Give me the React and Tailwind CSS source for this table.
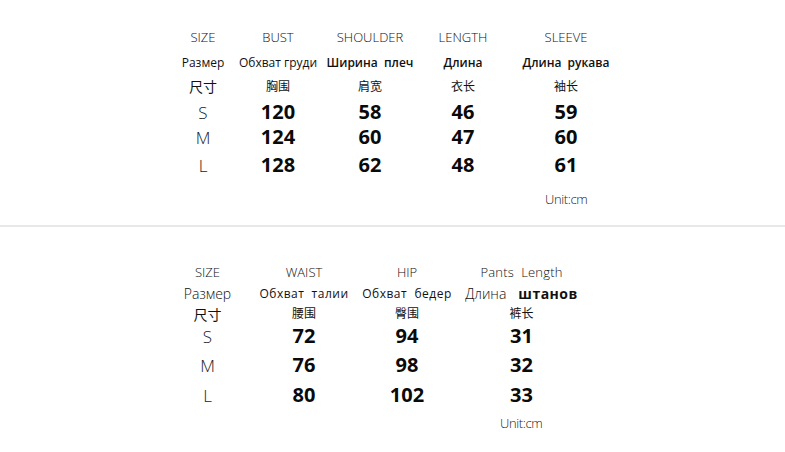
import React from "react"

const font = { fontFamily: '"Open Sans", "Noto Sans CJK SC", sans-serif' }

const topCols = "grid grid-cols-[70px_80px_104px_82px_124px] ml-[168px] text-center"
const botCols = "grid grid-cols-[97px_96px_110px_119px] ml-[159px] text-center"

const topRows = [
  ["S", "120", "58", "46", "59"],
  ["M", "124", "60", "47", "60"],
  ["L", "128", "62", "48", "61"],
]

const botRows = [
  ["S", "72", "94", "31"],
  ["M", "76", "98", "32"],
  ["L", "80", "102", "33"],
]

const topHeights = ["h-[28px]", "h-[22px]", "h-[34px]"]
const botHeights = ["h-[22px]", "h-[36px]", "h-[24px]"]

function NumRow({ cols, row, h }) {
  return (
    <div className={`${cols} ${h} items-center`}>
      <div className="text-[17px] leading-none font-light text-[#222]">{row[0]}</div>
      {row.slice(1).map((v, i) => (
        <div key={i} className="text-[20px] leading-none font-bold text-[#0a0a0a]">
          {v}
        </div>
      ))}
    </div>
  )
}

export default function App() {
  return (
    <div className="w-[785px] h-[452px] bg-white overflow-hidden text-[#222]" style={font}>
      {/* upper table */}
      <div className="h-[225px] pt-[25px]">
        <div className={`${topCols} h-[25px] items-center text-[13px] font-light text-[#111]`}>
          <div>SIZE</div>
          <div>BUST</div>
          <div>SHOULDER</div>
          <div>LENGTH</div>
          <div>SLEEVE</div>
        </div>
        <div className={`${topCols} h-[25px] items-center text-[12px] text-[#111]`}>
          <div>Размер</div>
          <div>Обхват груди</div>
          <div className="font-semibold">Ширина&nbsp; плеч</div>
          <div className="font-semibold">Длина</div>
          <div className="font-semibold">Длина&nbsp; рукава</div>
        </div>
        <div className={`${topCols} h-[23px] items-center text-[12px] text-[#111]`}>
          <div className="text-[14px]">尺寸</div>
          <div>胸围</div>
          <div>肩宽</div>
          <div>衣长</div>
          <div>袖长</div>
        </div>
        {topRows.map((r, i) => (
          <NumRow key={i} cols={topCols} row={r} h={topHeights[i]} />
        ))}
        <div className="mt-[8px] h-[20px] flex items-center pl-[545px] text-[13px] font-light text-[#222] tracking-[-0.4px]">
          Unit:cm
        </div>
      </div>

      <div className="h-[2px] bg-[#e8e8e8]" />

      {/* lower table */}
      <div className="pt-[36px]">
        <div className={`${botCols} h-[20px] items-center text-[13px] font-light text-[#111]`}>
          <div>SIZE</div>
          <div>WAIST</div>
          <div>HIP</div>
          <div className="tracking-[0.2px]">Pants&nbsp; Length</div>
        </div>
        <div className={`${botCols} h-[20px] items-center text-[12px] text-[#111]`}>
          <div className="font-light text-[14px]">Размер</div>
          <div className="font-medium tracking-[0.5px]">Обхват&nbsp; талии</div>
          <div className="font-medium tracking-[0.5px]">Обхват&nbsp; бедер</div>
          <div>
            <span className="font-light text-[14px]">Длина</span>
            <span className="ml-[12px] font-bold text-[14px] tracking-[0.5px]">штанов</span>
          </div>
        </div>
        <div className={`${botCols} h-[22px] items-center text-[12px] text-[#111]`}>
          <div className="text-[14px]">尺寸</div>
          <div>腰围</div>
          <div>臀围</div>
          <div>裤长</div>
        </div>
        {botRows.map((r, i) => (
          <NumRow key={i} cols={botCols} row={r} h={botHeights[i]} />
        ))}
        <div className="h-[34px] flex items-center pl-[500px] text-[13px] font-light text-[#222] tracking-[-0.4px]">
          Unit:cm
        </div>
      </div>
    </div>
  )
}
